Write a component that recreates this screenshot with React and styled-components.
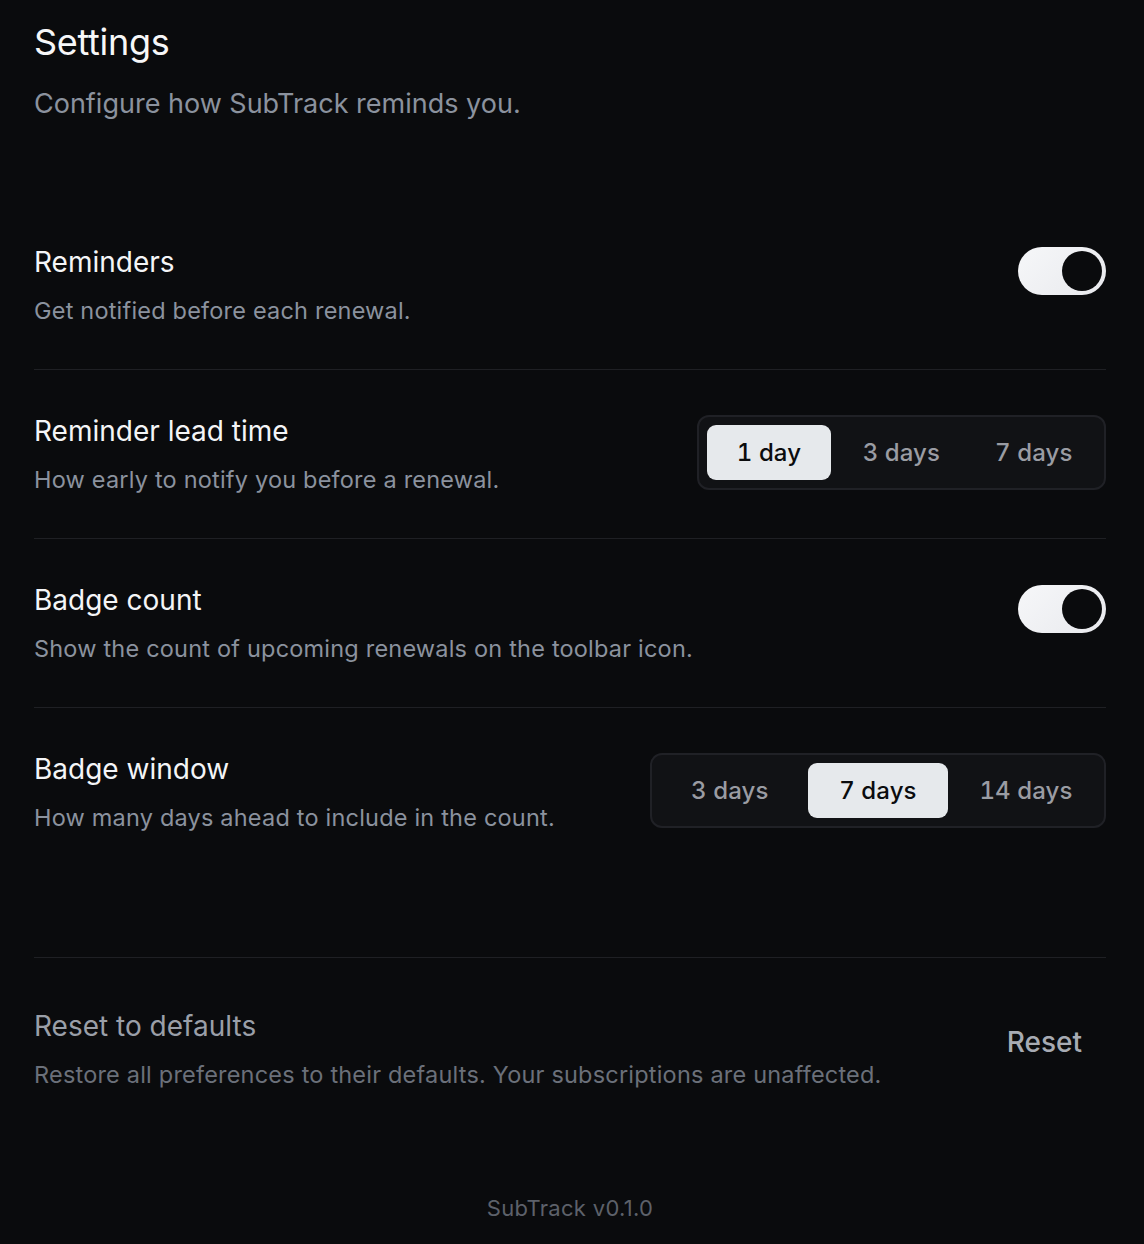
import React, { useState } from "react";
import styled, { createGlobalStyle } from "styled-components";

const GlobalStyle = createGlobalStyle`
  html, body {
    margin: 0;
    padding: 0;
    background: #0a0b0d;
  }
  body {
    font-family: Inter, "Noto Sans", "Liberation Sans", sans-serif;
    color: #f4f5f7;
    -webkit-font-smoothing: antialiased;
  }
  * {
    box-sizing: border-box;
  }
`;

const Page = styled.main`
  min-height: 1244px;
  padding: 20px 38px 0 34px;
  display: flex;
  flex-direction: column;
`;

const Header = styled.header`
  margin-bottom: 79px;
`;

const Title = styled.h1`
  margin: 0;
  font-size: 36px;
  line-height: 44px;
  font-weight: 400;
  letter-spacing: -0.3px;
  color: #f7f7f8;
`;

const Subtitle = styled.p`
  margin: 22px 0 0;
  font-size: 27px;
  line-height: 36px;
  color: #8b929e;
`;

const Row = styled.section`
  display: flex;
  align-items: flex-start;
  justify-content: space-between;
  gap: 32px;
  padding: 40.5px 0;
  border-bottom: ${(p) => (p.$last ? "none" : "1px solid #1f2024")};
`;

const RowText = styled.div`
  display: flex;
  flex-direction: column;
  gap: 11px;
`;

const RowTitle = styled.h2`
  margin: 0;
  font-size: 28px;
  line-height: 40px;
  font-weight: 400;
  color: ${(p) => (p.$muted ? "#9a9fa8" : "#f4f5f7")};
`;

const RowDesc = styled.p`
  margin: 0;
  font-size: 23.5px;
  line-height: 36px;
  letter-spacing: 0.2px;
  color: ${(p) => (p.$muted ? "#6b707a" : "#8b929e")};
`;

const ToggleTrack = styled.button`
  flex: none;
  margin-top: 5px;
  width: 88px;
  height: 48px;
  border: none;
  border-radius: 24px;
  padding: 0 4px;
  display: flex;
  align-items: center;
  justify-content: ${(p) => (p.$on ? "flex-end" : "flex-start")};
  background: ${(p) =>
    p.$on ? "linear-gradient(135deg, #f6f7f9 0%, #e8e9ed 100%)" : "#2a2c31"};
  cursor: pointer;
`;

const ToggleKnob = styled.span`
  width: 40px;
  height: 40px;
  border-radius: 50%;
  background: #0a0b0d;
`;

const Segmented = styled.div`
  flex: none;
  margin-top: 4.5px;
  display: inline-grid;
  grid-auto-flow: column;
  grid-auto-columns: 1fr;
  gap: 8px;
  padding: 8px;
  border: 2px solid #202126;
  border-radius: 12px;
  background: #111215;
`;

const SegmentButton = styled.button`
  height: 55px;
  padding: 0 23.5px;
  border: none;
  border-radius: 9px;
  font-family: inherit;
  font-size: 24px;
  font-weight: 500;
  letter-spacing: 0.1px;
  font-variant-numeric: tabular-nums;
  white-space: nowrap;
  cursor: pointer;
  background: ${(p) => (p.$active ? "#e6e9ec" : "transparent")};
  color: ${(p) => (p.$active ? "#0b0c0e" : "#9a9ca3")};
`;

const Spacer = styled.div`
  height: 82px;
  border-bottom: 1px solid #1f2024;
`;

const ResetRow = styled(Row)`
  padding: 48px 0;
`;

const ResetButton = styled.button`
  flex: none;
  border: none;
  background: transparent;
  padding: 14px 24px;
  font-family: inherit;
  font-size: 28px;
  line-height: 44px;
  font-weight: 500;
  color: #a7abb3;
  cursor: pointer;
`;

const Footer = styled.footer`
  margin-top: 54px;
  text-align: center;
  font-size: 22px;
  letter-spacing: 0.3px;
  color: #5d616a;
`;

const Toggle = ({ on, onChange }) => (
  <ToggleTrack $on={on} onClick={() => onChange(!on)} aria-pressed={on}>
    <ToggleKnob />
  </ToggleTrack>
);

const SegmentedControl = ({ options, value, onChange }) => (
  <Segmented>
    {options.map((opt) => (
      <SegmentButton
        key={opt}
        $active={opt === value}
        onClick={() => onChange(opt)}
      >
        {opt} {opt === 1 ? "day" : "days"}
      </SegmentButton>
    ))}
  </Segmented>
);

export default function App() {
  const [reminders, setReminders] = useState(true);
  const [leadTime, setLeadTime] = useState(1);
  const [badge, setBadge] = useState(true);
  const [badgeWindow, setBadgeWindow] = useState(7);

  return (
    <>
      <GlobalStyle />
      <Page>
        <Header>
          <Title>Settings</Title>
          <Subtitle>Configure how SubTrack reminds you.</Subtitle>
        </Header>

        <Row>
          <RowText>
            <RowTitle>Reminders</RowTitle>
            <RowDesc>Get notified before each renewal.</RowDesc>
          </RowText>
          <Toggle on={reminders} onChange={setReminders} />
        </Row>

        <Row>
          <RowText>
            <RowTitle>Reminder lead time</RowTitle>
            <RowDesc>How early to notify you before a renewal.</RowDesc>
          </RowText>
          <SegmentedControl
            options={[1, 3, 7]}
            value={leadTime}
            onChange={setLeadTime}
          />
        </Row>

        <Row>
          <RowText>
            <RowTitle>Badge count</RowTitle>
            <RowDesc>
              Show the count of upcoming renewals on the toolbar icon.
            </RowDesc>
          </RowText>
          <Toggle on={badge} onChange={setBadge} />
        </Row>

        <Row $last>
          <RowText>
            <RowTitle>Badge window</RowTitle>
            <RowDesc>How many days ahead to include in the count.</RowDesc>
          </RowText>
          <SegmentedControl
            options={[3, 7, 14]}
            value={badgeWindow}
            onChange={setBadgeWindow}
          />
        </Row>

        <Spacer />

        <ResetRow $last>
          <RowText>
            <RowTitle $muted>Reset to defaults</RowTitle>
            <RowDesc $muted>
              Restore all preferences to their defaults. Your subscriptions
              are unaffected.
            </RowDesc>
          </RowText>
          <ResetButton
            onClick={() => {
              setReminders(true);
              setLeadTime(1);
              setBadge(true);
              setBadgeWindow(7);
            }}
          >
            Reset
          </ResetButton>
        </ResetRow>

        <Footer>SubTrack v0.1.0</Footer>
      </Page>
    </>
  );
}
